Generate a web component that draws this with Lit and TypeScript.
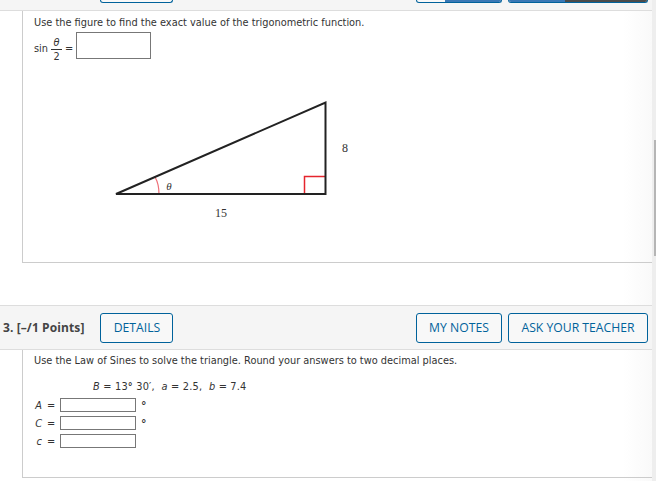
import { LitElement, css, html } from 'lit'
import { customElement } from 'lit/decorators.js'

@customElement('app-root')
export class AppRoot extends LitElement {
  renderTriangle() {
    return html`
      <svg class="figure" width="240" height="130" viewBox="0 0 240 130">
        <path class="red" d="M193.5 96V78.5H214" />
        <path class="red thin" d="M44 79Q48 86 48 96" />
        <path class="tri" d="M5 96L214.5 4.5V96Z" />
        <text class="label theta" x="58" y="92" text-anchor="middle">θ</text>
        <text class="label" x="110" y="118.5" text-anchor="middle">15</text>
        <text class="label" x="234" y="54" text-anchor="middle">8</text>
      </svg>
    `;
  }

  render() {
    return html`
      <div class="page">
        <div class="bar top">
          <span class="btn stub details"></span>
          <span class="spacer"></span>
          <span class="btn stub notes"><span class="cover blue"></span></span>
          <span class="btn stub ask"><span class="cover blue"></span><span class="cover dark"></span></span>
        </div>

        <section class="card first">
          <p class="prompt">Use the figure to find the exact value of the trigonometric function.</p>
          <div class="equation">
            <span class="low">sin</span>
            <span class="fraction"><i>θ</i><span>2</span></span>
            <span class="low">=</span>
            <span class="field large"></span>
          </div>
          ${this.renderTriangle()}
        </section>

        <div class="bar">
          <span class="points">3. [–/1 Points]</span>
          <span class="btn details">DETAILS</span>
          <span class="spacer"></span>
          <span class="btn notes">MY NOTES</span>
          <span class="btn ask">ASK YOUR TEACHER</span>
        </div>

        <section class="card second">
          <p class="prompt">Use the Law of Sines to solve the triangle. Round your answers to two decimal places.</p>
          <p class="given"><i>B</i> = 13<span class="deg">°</span> 30′, &nbsp;<i>a</i> = 2.5, &nbsp;<i>b</i> = 7.4</p>
          <div class="answers">
            <i>A</i><span class="eq">=</span><span class="field"></span><span class="deg unit">°</span>
            <i>C</i><span class="eq">=</span><span class="field"></span><span class="deg unit">°</span>
            <i>c</i><span class="eq">=</span><span class="field"></span><span></span>
          </div>
        </section>

        <div class="scrollbar"><div class="thumb"></div></div>
      </div>
    `;
  }

  static get styles() {
    return css`
    :host {
      display: block;
      font-family: "DejaVu Sans", sans-serif;
      font-size: 9.8px;
      color: #333;
    }
    .page {
      position: relative;
      width: 656px;
      height: 481px;
      overflow: hidden;
      background: linear-gradient(to right, #fff 95%, #f9f9f9 99.4%);
    }
    .bar {
      display: flex;
      align-items: center;
      gap: 6px;
      box-sizing: border-box;
      width: 652px;
      height: 45px;
      padding: 0 4px 0 3px;
      background: #f5f5f5;
      border-top: 1px solid #ddd;
      border-bottom: 1px solid #ddd;
    }
    .bar.top {
      height: 11px;
      border-top: 0;
      align-items: flex-start;
    }
    .spacer {
      flex: 1;
    }
    .points {
      font: bold 12px "Open Sans", sans-serif;
      color: #444;
      margin-right: 10px;
      letter-spacing: 0.1px;
    }
    .btn {
      box-sizing: border-box;
      flex: none;
      display: flex;
      align-items: center;
      justify-content: center;
      height: 30px;
      border: 1px solid #00629b;
      border-radius: 3px;
      background: #f8f8f8;
      color: #00629b;
      font: 12.2px "Open Sans", sans-serif;
    }
    .details { width: 73px; }
    .notes { width: 86px; }
    .ask { width: 140px; }
    .bar.top .details {
      margin-left: 97px;
    }
    .stub {
      height: 3px;
      border-top: 0;
      border-radius: 0 0 3px 3px;
      justify-content: flex-start;
      overflow: hidden;
    }
    .cover {
      display: block;
      height: 2px;
      align-self: flex-start;
    }
    .notes .cover {
      width: 100%;
      margin-left: 28px;
    }
    .blue {
      background: #3a78b5;
    }
    .ask .blue {
      width: 56px;
    }
    .dark {
      flex: 1;
      background: #4a4a4a;
    }
    .card {
      box-sizing: border-box;
      width: 630px;
      margin-left: 22px;
      border-left: 1px solid #ccc;
      border-bottom: 1px solid #ccc;
      padding: 0 11px;
    }
    .card.first {
      height: 252px;
      margin-bottom: 42px;
    }
    .card.first .prompt {
      padding-top: 6px;
    }
    .card.second {
      height: 128px;
    }
    .prompt {
      margin: 0;
      padding-top: 5px;
      line-height: 12px;
    }
    .equation {
      display: flex;
      align-items: center;
      gap: 3px;
      height: 27px;
      margin-top: 3px;
    }
    .low {
      margin-top: 5px;
    }
    .fraction {
      display: flex;
      flex-direction: column;
      align-items: center;
      align-self: flex-start;
      width: 11px;
      margin-top: 4px;
      line-height: 13px;
    }
    .fraction i {
      width: 100%;
      text-align: center;
      border-bottom: 1px solid #333;
    }
    .field {
      display: block;
      box-sizing: border-box;
      width: 76px;
      height: 14px;
      border: 1px solid #777;
      background: #fff;
    }
    .field.large {
      width: 75px;
      height: 27px;
    }
    .figure {
      display: block;
      margin: 39px 0 0 77px;
    }
    .tri {
      fill: none;
      stroke: #222;
      stroke-width: 2;
    }
    .red {
      fill: none;
      stroke: #e5252d;
      stroke-width: 1.5;
    }
    .red.thin {
      stroke: #ee7078;
      stroke-width: 1.2;
    }
    .label {
      font: 12px "Liberation Serif", serif;
      fill: #333;
    }
    .theta {
      font-style: italic;
      font-size: 11px;
    }
    .given {
      margin: 14px 0 0 59px;
      line-height: 12px;
      letter-spacing: 0.2px;
    }
    .answers {
      display: grid;
      grid-template-columns: 8px 18px 76px 10px;
      grid-auto-rows: 14px;
      row-gap: 4px;
      align-items: center;
      justify-items: end;
      margin-top: 5px;
    }
    .eq {
      justify-self: start;
      padding-left: 5px;
    }
    .deg {
      font-weight: bold;
    }
    .unit {
      justify-self: start;
      padding: 2px 0 0 5px;
      font-size: 11px;
      line-height: 14px;
    }
    .scrollbar {
      position: absolute;
      top: 0;
      right: 0;
      width: 4px;
      height: 481px;
      background: #eee;
    }
    .thumb {
      position: absolute;
      top: 140px;
      left: 2px;
      width: 2px;
      height: 116px;
      background: #b5b5b5;
    }`;
  }
}

declare global {
  interface HTMLElementTagNameMap {
    'app-root': AppRoot;
  }
}
